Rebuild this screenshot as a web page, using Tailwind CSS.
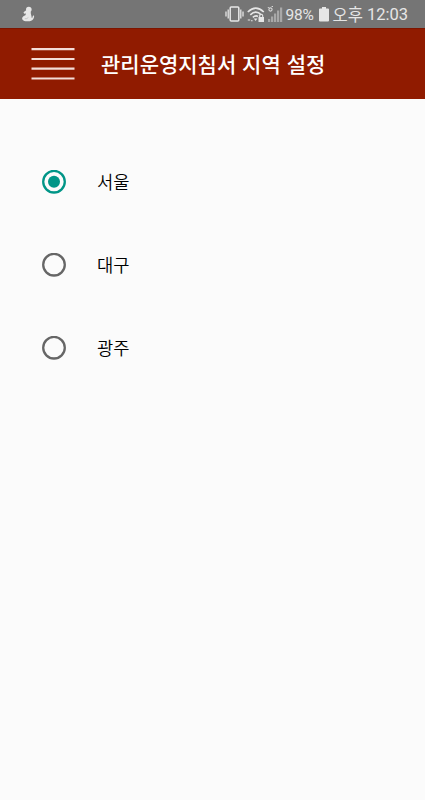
<!DOCTYPE html>
<html lang="ko">
  <head>
    <meta charset="utf-8" />
    <meta name="viewport" content="width=device-width, initial-scale=1" />
    <title>관리운영지침서 지역 설정</title>
    <script src="https://cdn.jsdelivr.net/npm/@tailwindcss/browser@4"></script>
  </head>
  <body class="h-[800px] overflow-hidden bg-[#fbfbfb] font-['Noto_Sans_CJK_KR',sans-serif] text-black">
    <!-- Status bar -->
    <div class="flex h-7 items-center bg-[#757575] pl-[21px] pr-[17px] text-[#e6e6e6]">
      <svg class="h-5 w-4" viewBox="0 0 16 20" fill="currentColor">
        <circle cx="7.8" cy="5.5" r="2.8" />
        <path d="M5.5 6 2.5 8.2 3.2 9.8 5 9.5 4.4 11.2C1.8 12 .8 13.5 1.2 15.2 2.5 17.3 5 17.5 7.5 17.3 11.5 17 13.6 14.6 13 11.2L11.8 11.9 11.4 13.8 10.6 13.8C10.8 11.6 9.4 10 9.8 7.5Z" />
        <path d="M3.8 14.7Q6 15.2 7.4 13.4" fill="none" stroke="#b0b0b0" stroke-width=".6" />
      </svg>
      <div class="ml-auto flex items-center">
        <svg class="h-5 w-[19px]" viewBox="0 0 19 20" fill="none" stroke="currentColor" stroke-width="1.5">
          <rect x="5.2" y="3" width="8.6" height="14" rx="1" />
          <path d="M3.2 5.5v9M15.8 5.5v9M1 7.5v5M18 7.5v5" stroke-width="1.3" />
        </svg>
        <svg class="ml-[3px] h-5 w-[18px]" viewBox="0 0 18 20" fill="none" stroke="currentColor" stroke-width="1.6">
          <path d="M.8 8Q8.8.4 16.8 8M3.3 10.8Q8.8 5.6 14.3 10.8M5.8 13.4Q8.8 10.8 11 12.5" />
          <path d="M6.8 14.6h3.6L8.6 17Z" fill="currentColor" stroke="none" />
          <path d="M.8 16h2.4M4 16.8h1.6" stroke-width="1.1" />
          <path d="M11.5 13H17v5h-5.500z" fill="currentColor" stroke="none" />
          <path d="M12.7 13.500v-1.700a1.500 1.500 0 0 1 3 0v1.700" stroke-width="1.100" />
        </svg>
        <svg class="ml-0.5 h-5 w-[17px]" viewBox="0 0 17 20" fill="#a8a8a8">
          <path d="M1 15h2.200v3H1zM4 12.500h2.200V18H4zM7 9.500h2.200V18H7zM10 6.500h2.200V18H10zM13 3.500h2.200V18H13z" />
          <circle cx="3.500" cy="5.500" r="1.600" fill="none" stroke="#d8d8d8" stroke-width="1.100" />
          <path d="M.8 3.500h1M4.600 2.500h1.400" stroke="#d8d8d8" />
        </svg>
        <span class="ml-0.5 w-[29px] whitespace-nowrap pt-px font-[Roboto] text-[15.5px] leading-7 tracking-[-0.2px]">98%</span>
        <svg class="ml-1 h-5 w-[10px]" viewBox="0 0 10 20" fill="currentColor">
          <path d="M3 3h4v1.400h2a1 1 0 0 1 1 1V16.500a1 1 0 0 1-1 1H1a1 1 0 0 1-1-1V5.400a1 1 0 0 1 1-1h2z" />
        </svg>
        <span class="ml-1 text-[16.5px] leading-7">오후</span>
        <span class="ml-1 pt-0.5 font-[Roboto] text-[16.5px] leading-7">12:03</span>
      </div>
    </div>

    <!-- App bar -->
    <header class="flex h-[71px] items-center border-t border-[#7d1500] bg-[#901b00] pl-[31px]">
      <button class="block" aria-label="메뉴">
        <svg class="h-8 w-11" viewBox="0 0 44 32" stroke="#f3ddd8" stroke-width="2.2">
          <path d="M.5 1.200h43M.5 11h43M.5 20.700h43M.5 30.500h43" />
        </svg>
      </button>
      <h1 class="ml-[26px] whitespace-nowrap pb-0.5 text-[21px] font-medium leading-8 text-white">관리운영지침서 지역 설정</h1>
    </header>

    <!-- Region choices -->
    <main class="flex flex-col pl-[42px] pt-[41px] font-[350]">
      <label class="flex h-[83px] items-center gap-[31px]">
        <svg class="size-6" viewBox="0 0 24 24">
          <circle cx="12" cy="11.700" r="10.800" fill="none" stroke="#009587" stroke-width="2.300" />
          <circle cx="12" cy="11.700" r="6" fill="#009587" />
        </svg>
        <span class="text-[17.7px]">서울</span>
      </label>
      <label class="flex h-[83px] items-center gap-[31px]">
        <svg class="size-6" viewBox="0 0 24 24">
          <circle cx="12" cy="11.700" r="10.800" fill="none" stroke="#666" stroke-width="2.300" />
        </svg>
        <span class="text-[17.7px]">대구</span>
      </label>
      <label class="flex h-[83px] items-center gap-[31px]">
        <svg class="size-6" viewBox="0 0 24 24">
          <circle cx="12" cy="11.700" r="10.800" fill="none" stroke="#666" stroke-width="2.300" />
        </svg>
        <span class="text-[17.7px]">광주</span>
      </label>
    </main>
  </body>
</html>
